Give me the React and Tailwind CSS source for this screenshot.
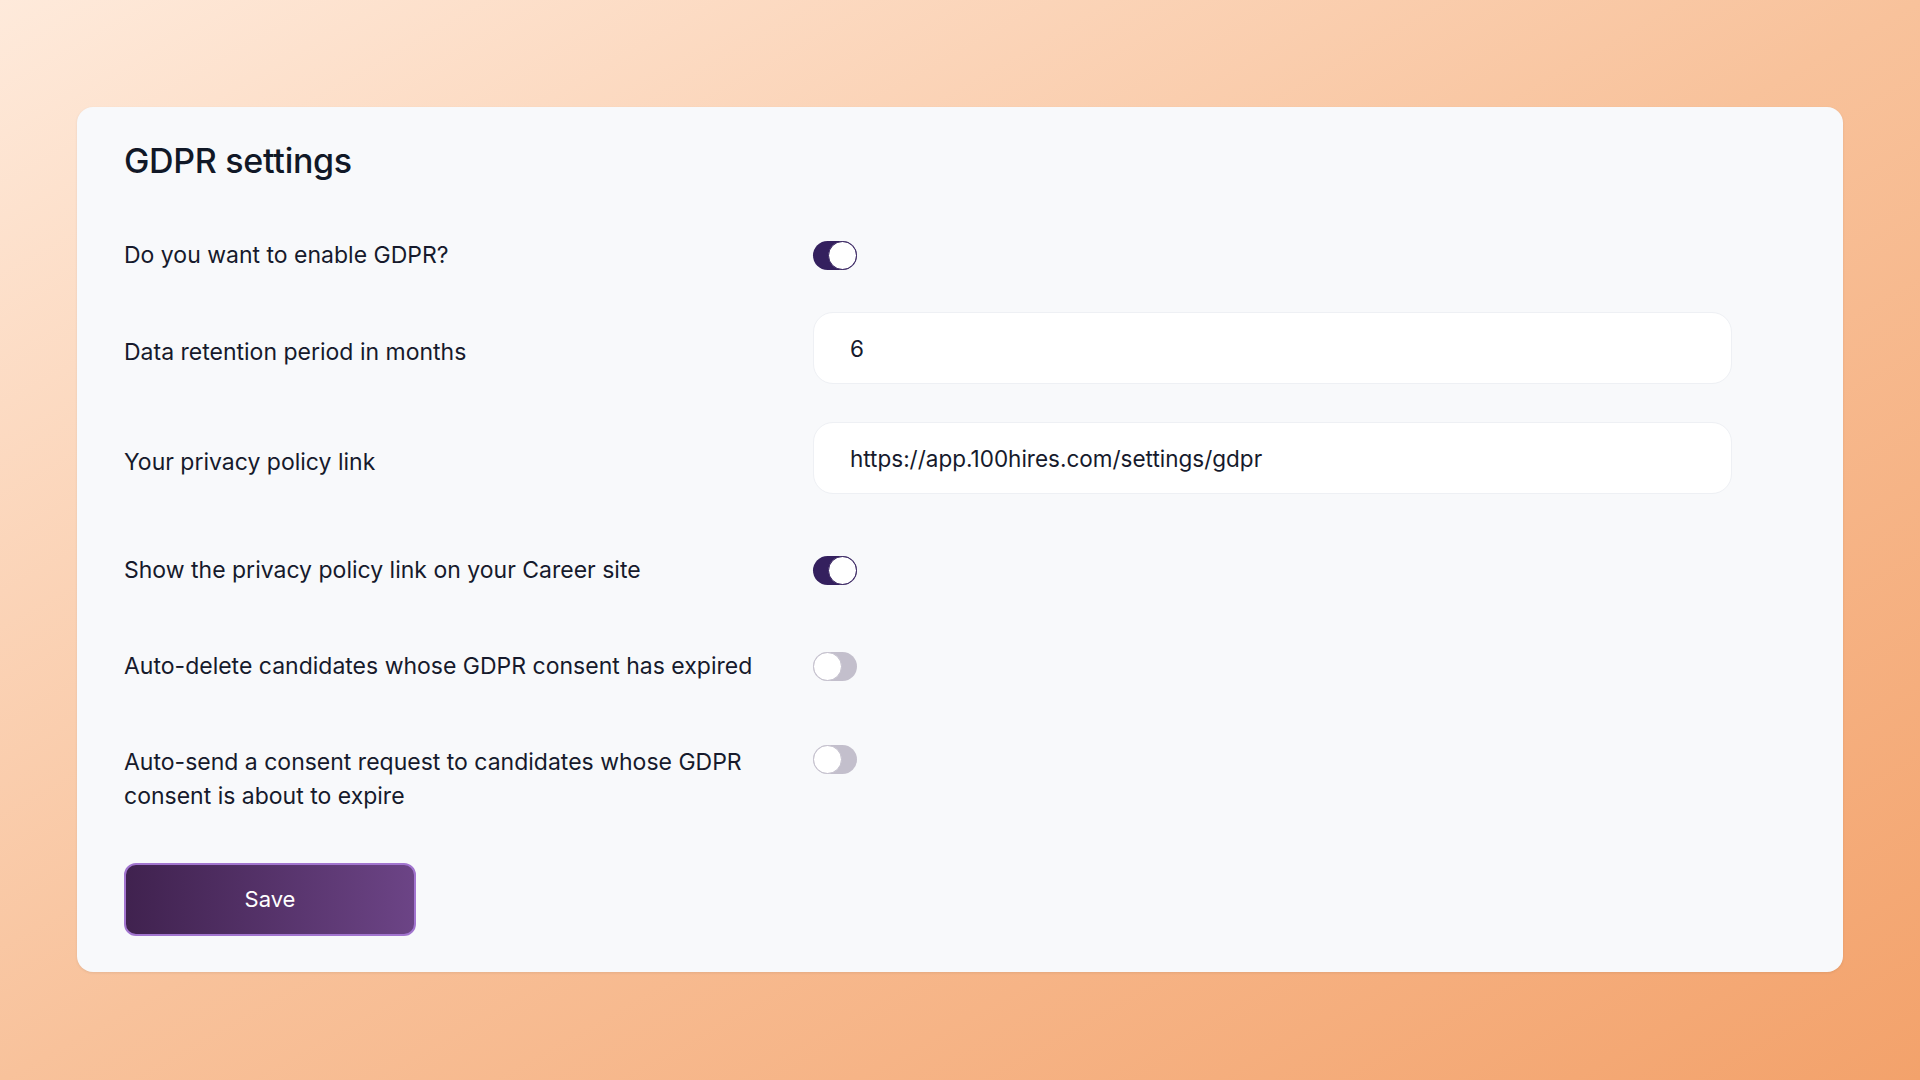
import React, { useState } from 'react';

function Toggle({ on, onChange }) {
  return (
    <button
      type="button"
      onClick={() => onChange(!on)}
      className={
        on
          ? 'relative w-[44px] h-[29px] rounded-full bg-[#34205e] shrink-0'
          : 'relative w-[44px] h-[29px] rounded-full bg-[#c3bfcc] shrink-0'
      }
    >
      <span
        className={
          on
            ? 'absolute top-0 right-0 w-[29px] h-[29px] rounded-full bg-white border-[1.5px] border-[#34205e]'
            : 'absolute top-0 left-0 w-[29px] h-[29px] rounded-full bg-white border-[1.5px] border-[#c3bfcc]'
        }
      />
    </button>
  );
}

function App() {
  const [gdpr, setGdpr] = useState(true);
  const [showLink, setShowLink] = useState(true);
  const [autoDelete, setAutoDelete] = useState(false);
  const [autoSend, setAutoSend] = useState(false);
  const [months, setMonths] = useState('6');
  const [link, setLink] = useState('https://app.100hires.com/settings/gdpr');

  return (
    <div
      className="min-h-screen w-full bg-linear-to-br from-[#feeadb] via-[#f8c29b] to-[#f3a26b] px-[77px] pt-[107px] pb-[108px]"
      style={{ fontFamily: 'Inter, "Noto Sans", sans-serif' }}
    >
      <div className="bg-[#f8f9fb] rounded-[16px] shadow-[0_1px_3px_rgba(0,0,0,0.08)] pl-[47px] pr-[48px] pt-[34px] pb-[36px] text-[#161a2c]">
        {/* Heading */}
        <h1 className="text-[34px] leading-[40px] font-medium text-[#111827] tracking-[-0.3px]">GDPR settings</h1>

        {/* Enable GDPR */}
        <div className="flex items-center mt-[57px]">
          <div className="w-[689px] text-[23px] leading-[34px]">Do you want to enable GDPR?</div>
          <Toggle on={gdpr} onChange={setGdpr} />
        </div>

        {/* Retention period */}
        <div className="flex items-center mt-[40px]">
          <div className="w-[689px] pt-[7px] text-[23px] leading-[34px]">Data retention period in months</div>
          <input
            value={months}
            onChange={(e) => setMonths(e.target.value)}
            className="w-[919px] h-[72px] rounded-[20px] bg-white border border-[#eef0f4] px-[36px] text-[22.5px] text-[#161a2c] outline-none"
          />
        </div>

        {/* Privacy link */}
        <div className="flex items-center mt-[38px]">
          <div className="w-[689px] pt-[7px] text-[23px] leading-[34px]">Your privacy policy link</div>
          <input
            value={link}
            onChange={(e) => setLink(e.target.value)}
            className="w-[919px] h-[72px] rounded-[20px] bg-white border border-[#eef0f4] px-[36px] text-[22.5px] text-[#161a2c] outline-none"
          />
        </div>

        {/* Show link */}
        <div className="flex items-center mt-[59px]">
          <div className="w-[689px] text-[23px] leading-[34px]">Show the privacy policy link on your Career site</div>
          <Toggle on={showLink} onChange={setShowLink} />
        </div>

        {/* Auto delete */}
        <div className="flex items-center mt-[62px]">
          <div className="w-[689px] text-[23px] leading-[34px]">Auto-delete candidates whose GDPR consent has expired</div>
          <Toggle on={autoDelete} onChange={setAutoDelete} />
        </div>

        {/* Auto send */}
        <div className="flex items-start mt-[62px]">
          <div className="w-[689px] pr-[50px] text-[23px] leading-[34px]">
            Auto-send a consent request to candidates whose GDPR consent is about to expire
          </div>
          <Toggle on={autoSend} onChange={setAutoSend} />
        </div>

        <button
          type="button"
          className="mt-[50px] w-[292px] h-[73px] rounded-[12px] border-2 border-[#a275cf] bg-linear-to-r from-[#40224f] to-[#6c4486] text-white text-[22px]"
        >
          Save
        </button>
      </div>
    </div>
  );
}

export default App;
